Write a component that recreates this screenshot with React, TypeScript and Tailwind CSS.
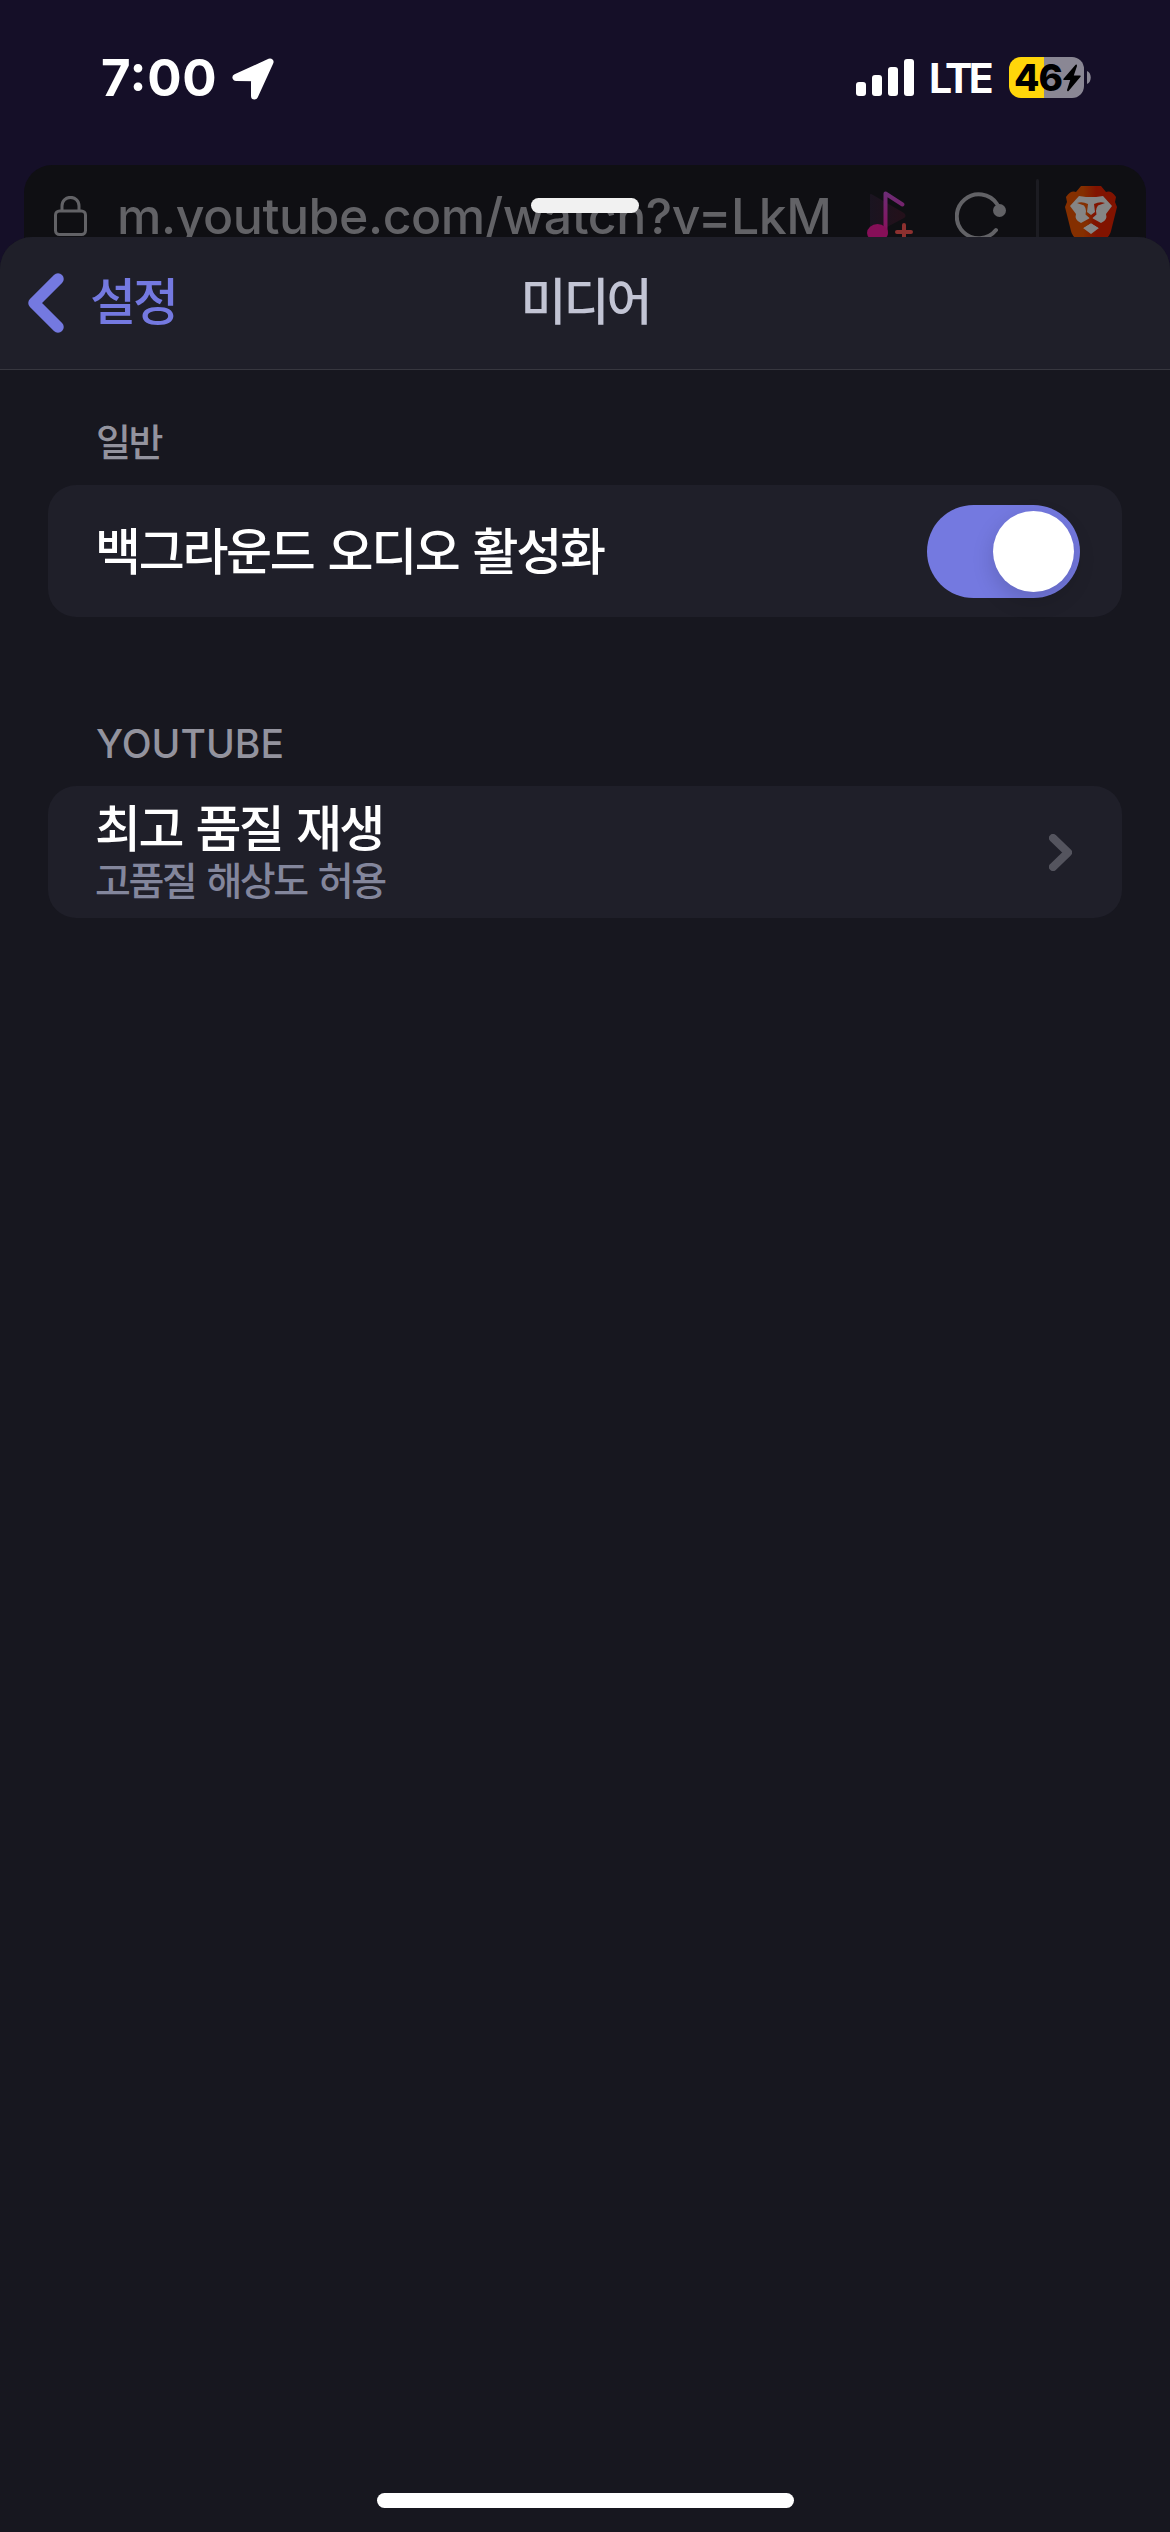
import React from "react";

const ko = "font-['Noto_Sans_CJK_KR',sans-serif] whitespace-nowrap";

function StatusBar() {
  return (
    <div className="flex h-[165px] shrink-0 items-start pt-[47px] pl-[101px] text-white">
      <span className="w-[131px] whitespace-nowrap font-['Inter'] text-[51px] leading-[61px] font-bold tracking-[0.6px] [font-feature-settings:'case']">7:00</span>
      <svg className="mt-[11px]" width="42" height="42" viewBox="0 0 42 42" fill="white" stroke="white" strokeWidth="7" strokeLinejoin="round">
        <path d="M38 4 L4 19.5 L22.5 19.7 L22.5 38 Z" />
      </svg>
      <svg className="mt-[12px] ml-[582px]" width="58" height="37" fill="white">
        <rect x="0" y="23" width="10" height="14" rx="3" />
        <rect x="16" y="16" width="10" height="21" rx="3" />
        <rect x="32" y="8" width="10" height="29" rx="3" />
        <rect x="48" y="0" width="10" height="37" rx="3" />
      </svg>
      <span className="ml-[15px] w-[80px] whitespace-nowrap font-['Inter'] text-[41px] leading-[63px] font-bold tracking-[-3.5px]">LTE</span>
      <div className="mt-[10px] flex h-[41px] w-[75px] items-center rounded-[12px] bg-linear-to-r from-[#ffd60a] from-[47%] to-[#8a8794] to-[47%] pl-[5px] text-black">
        <span className="w-[49px] whitespace-nowrap font-['Inter'] text-[37px] leading-[41px] font-extrabold tracking-[-1px]">46</span>
        <svg width="18" height="28" viewBox="0 0 18 28">
          <path d="M12.600 0.800 L0.300 15 Q0 16 1 16 H7.200 L4 26 Q4.200 28 5.600 27 L17.700 12.600 Q18 11.500 17 11.500 H10.800 L14 2 Q14 0 12.600 0.800Z" />
        </svg>
      </div>
      <svg className="mt-[24px] ml-[3px]" width="5" height="13" fill="#8a8794">
        <path d="M0 0 C5 2 5 11 0 13Z" />
      </svg>
    </div>
  );
}

function UrlBar() {
  return (
    <div className="relative mx-6 flex h-[110px] shrink-0 rounded-t-[28px] bg-[#0f0f13] text-[#626266]">
      <svg className="mt-[31px] ml-[30px]" width="33" height="41" fill="none" stroke="#626266" strokeWidth="3">
        <path d="M8 14 V10 C8 -1.500 25 -1.500 25 10 V14" />
        <rect x="1.500" y="15" width="30" height="23.500" rx="4" />
      </svg>
      <span className="mt-[21px] ml-[30px] w-[746px] whitespace-nowrap font-['Inter'] text-[50px] leading-[61px] font-medium tracking-[-0.45px]">m.youtube.com/watch?v=LkM</span>
      <svg className="mt-[24px] ml-[3px]" width="52" height="56" viewBox="866 189 52 56">
        <defs>
          <linearGradient id="note" x1="0" y1="0" x2="0" y2="1">
            <stop offset="0" stopColor="#6d2c75" />
            <stop offset="1" stopColor="#8b0f5b" />
          </linearGradient>
          <linearGradient id="play">
            <stop offset="0" stopColor="#1a1420" />
            <stop offset="1" stopColor="#24101a" />
          </linearGradient>
        </defs>
        <path d="M870 195 Q870 193 873 195 L904 213 Q907 216 904 218 L870 236Z" fill="url(#play)" />
        <path d="M885.500 234 V193.500 L902.500 204.500" fill="none" stroke="url(#note)" strokeWidth="4" strokeLinecap="round" strokeLinejoin="round" />
        <ellipse cx="877.500" cy="233" rx="10.500" ry="9" fill="#860f58" />
        <path d="M904 225 V240 M897 232 H911" stroke="#8c302f" strokeWidth="4" strokeLinecap="round" />
      </svg>
      <svg className="mt-[21px] ml-[37px]" width="52" height="56" viewBox="954 186 52 56" fill="none">
        <path d="M996 204 A22 22 0 1 0 995 230" stroke="#626266" strokeWidth="4" strokeLinecap="round" />
        <circle cx="998.500" cy="210.500" r="6.500" fill="#626266" />
      </svg>
      <div className="mt-[14px] ml-[29px] h-[96px] w-[3px] rounded-t-full bg-[#1c1c22]" />
      <svg className="mt-[21px] ml-[26px]" width="52" height="60" viewBox="0 0 52 60">
        <defs>
          <linearGradient id="brave">
            <stop offset="0.350" stopColor="#842f00" />
            <stop offset="0.600" stopColor="#811300" />
          </linearGradient>
        </defs>
        <path d="M16 0 H36 L41 6 Q46 4 51 11 L50 16 L52 21 L46 45 Q45 50 40 53 L26 60 L12 53 Q7 50 6 45 L0 21 L2 16 L1 11 Q6 4 11 6Z" fill="url(#brave)" />
        <path d="M14 10 L21 11 H31 L38 10 L47 20 L41 28 Q43 34 36 37 L27 32 H25 L16 37 Q9 34 11 28 L5 20Z M26 37 L34 42 L26 48 L18 42Z" fill="#858585" />
        <path d="M12 17 Q17 15 23 18 L22 26 L26 29 L30 26 L29 18 Q35 15 40 17 L33 19.500 Q31 22 31 25 L31.500 28.500 L27.500 32 V34 L36 39 L34 42 L26 37 L18 42 L16 39 L24.500 34 V32 L20.500 28.500 L21 25 Q21 22 19 19.500Z" fill="url(#brave)" />
      </svg>
      <div className="absolute top-[33px] left-[507px] h-[15px] w-[108px] rounded-full bg-[#f1f1f1]" />
    </div>
  );
}

function Header() {
  return (
    <header className="grid h-[133px] shrink-0 grid-cols-3 items-center rounded-t-[32px] border-b border-[#37373f] bg-[#1f1f29]">
      <div className="flex items-center pl-[28px] text-[#7479e0]">
        <svg width="36" height="60" fill="none" stroke="currentColor" strokeWidth="11.500" strokeLinecap="round" strokeLinejoin="round">
          <path d="M30 6 L6 30 L30 54" />
        </svg>
        <span className={`${ko} mb-[10px] ml-[26px] text-[50px] leading-[60px] font-medium tracking-[-3px]`}>설정</span>
      </div>
      <h1 className={`${ko} mb-[10px] text-center text-[50px] leading-[60px] font-medium tracking-[-3px] text-[#c2c4d4]`}>미디어</h1>
    </header>
  );
}

export default function App() {
  return (
    <div className="flex h-[2532px] w-[1170px] flex-col overflow-hidden bg-[#150f28]">
      <StatusBar />
      <UrlBar />
      <div className="relative mt-[-38px] flex grow flex-col rounded-t-[32px] bg-[#17171f]">
        <Header />
        <main className="flex grow flex-col px-12">
          <h2 className={`${ko} mt-[40px] ml-[48px] h-[75px] text-[38px] leading-[60px] font-medium tracking-[-2.500px] text-[#93939e]`}>일반</h2>
          <div className="flex h-[132px] items-center justify-between rounded-[28px] bg-[#1f1f29] pr-[42px] pl-[47px]">
            <span className={`${ko} mb-[6px] text-[50px] leading-[60px] font-medium tracking-[-2.3px] [word-spacing:5px] text-white`}>백그라운드 오디오 활성화</span>
            <div className="flex h-[93px] w-[153px] items-center justify-end rounded-full bg-[#7479e0] pr-[6px]">
              <div className="h-[81px] w-[81px] rounded-full bg-white shadow-[0_8px_22px_rgba(0,0,0,0.16)]" />
            </div>
          </div>
          <h2 className="mt-[97px] ml-[48px] h-[72px] font-['Inter'] text-[39px] leading-[60px] font-medium text-[#93939e]">YOUTUBE</h2>
          <div className="flex h-[132px] items-center justify-between rounded-[28px] bg-[#1f1f29] pr-[50px] pl-[47px]">
            <div className="mb-[7px] flex flex-col">
              <span className={`${ko} text-[50px] leading-[60px] font-medium tracking-[-2.6px] [word-spacing:5px] text-white`}>최고 품질 재생</span>
              <span className={`${ko} text-[39px] leading-[47px] font-medium tracking-[-2.500px] [word-spacing:5px] text-[#83869c]`}>고품질 해상도 허용</span>
            </div>
            <svg width="23" height="37" fill="none" stroke="#54545e" strokeWidth="8" strokeLinecap="round" strokeLinejoin="round">
              <path d="M4 4 L19 18.500 L4 33" />
            </svg>
          </div>
        </main>
        <div className="mx-auto mb-[24px] h-[15px] w-[417px] rounded-full bg-white" />
      </div>
    </div>
  );
}
